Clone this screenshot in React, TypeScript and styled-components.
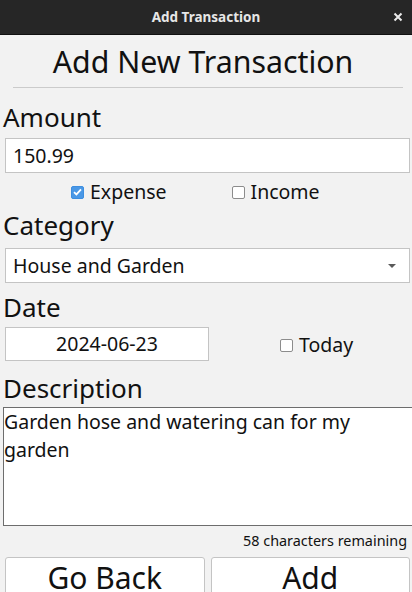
import React from "react";
import styled, { createGlobalStyle } from "styled-components";

const GlobalStyle = createGlobalStyle`
  html, body {
    margin: 0;
    padding: 0;
    background: #f2f2f2;
  }
  body {
    font-family: "Noto Sans", "DejaVu Sans", sans-serif;
    color: #111;
  }
  * { box-sizing: border-box; }
`;

const Window = styled.div`
  width: 412px;
  height: 592px;
  overflow: hidden;
  display: flex;
  flex-direction: column;
  background: #f2f2f2;
`;

const TitleBar = styled.div`
  position: relative;
  flex: 0 0 35px;
  height: 35px;
  background: #262626;
  border-bottom: 1px solid #111;
  display: flex;
  align-items: center;
  justify-content: center;
`;

const TitleText = styled.span`
  font-weight: 700;
  font-size: 13.5px;
  color: #e6e6e6;
`;

const CloseButton = styled.button`
  position: absolute;
  right: 6px;
  top: 9px;
  width: 16px;
  height: 16px;
  padding: 0;
  border: 0;
  background: transparent;
  display: flex;
  align-items: center;
  justify-content: center;
`;

const Content = styled.div`
  display: flex;
  flex-direction: column;
`;

const Heading = styled.h1`
  margin: 7px 0 0;
  padding-right: 6px;
  font-size: 30.3px;
  line-height: 40px;
  font-weight: 400;
  text-align: center;
`;

const Rule = styled.hr`
  margin: 5px 9px 0 13px;
  border: 0;
  border-top: 1px solid #cbcbcb;
  height: 0;
`;

const Label = styled.div<{ $top: number }>`
  margin: ${(p) => p.$top}px 0 0 3px;
  font-size: 26px;
  line-height: 32px;
`;

const Field = styled.div<{ $top: number; $width?: string; $center?: boolean }>`
  margin: ${(p) => p.$top}px 2px 0 5px;
  width: ${(p) => p.$width ?? "auto"};
  height: 35px;
  background: #fff;
  border: 1px solid #c4c4c4;
  font-size: 19.5px;
  line-height: 33px;
  padding: 0 7px;
  text-align: ${(p) => (p.$center ? "center" : "left")};
`;

const Combo = styled(Field)`
  display: flex;
  align-items: center;
  justify-content: space-between;
  padding-right: 13px;
`;

const Arrow = styled.span`
  width: 0;
  height: 0;
  border-left: 4px solid transparent;
  border-right: 4px solid transparent;
  border-top: 4px solid #5a5a5a;
`;

const CheckRow = styled.div`
  margin: 7px 0 0 71px;
  display: flex;
  gap: 65px;
  height: 24px;
`;

const CheckGroup = styled.label`
  display: flex;
  align-items: center;
  gap: 6px;
  font-size: 19.5px;
  line-height: 24px;
`;

const Box = styled.span<{ $checked?: boolean }>`
  width: 13px;
  height: 13px;
  border-radius: 2px;
  border: 1px solid ${(p) => (p.$checked ? "#3d8ee0" : "#8c8c8c")};
  background: ${(p) => (p.$checked ? "#4a98e6" : "#fff")};
  display: flex;
  align-items: center;
  justify-content: center;
  flex: 0 0 13px;
`;

const DateRow = styled.div`
  margin-top: 4px;
  display: flex;
  align-items: center;
`;

const DateField = styled(Field)`
  margin: 0 0 0 5px;
  flex: 0 0 204px;
  width: 204px;
  height: 34px;
  line-height: 32px;
`;

const TodayWrap = styled.div`
  margin-left: 71px;
  padding-top: 2px;
`;

const TextArea = styled.div`
  margin: 3px -4px 0 3px;
  height: 119px;
  background: #fff;
  border: 1px solid #6d6d6d;
  font-size: 19.5px;
  line-height: 28px;
  padding: 0;
`;

const Counter = styled.div`
  margin: 5px 5px 0 0;
  text-align: right;
  font-size: 14.4px;
  line-height: 20px;
`;

const ButtonRow = styled.div`
  margin: 6px 2px 0 5px;
  display: grid;
  grid-template-columns: 1fr 1fr;
  gap: 6px;
`;

const Button = styled.button`
  height: 60px;
  background: #fff;
  border: 1px solid #c4c4c4;
  border-radius: 3px;
  font-family: "Noto Sans", sans-serif;
  font-size: 30px;
  line-height: 40px;
  color: #111;
  padding: 0;
  display: flex;
  align-items: flex-start;
  justify-content: center;
`;

const Check = () => (
  <svg width="9" height="8" viewBox="0 0 9 8">
    <path d="M1 4.2 L3.4 6.4 L8 1.4" fill="none" stroke="#fff" strokeWidth="1.8" />
  </svg>
);

export default function App() {
  return (
    <>
      <GlobalStyle />
      <Window>
        <TitleBar>
          <TitleText>Add Transaction</TitleText>
          <CloseButton aria-label="close">
            <svg width="10" height="10" viewBox="0 0 10 10">
              <path d="M1.5 1.5 L8.5 8.5 M8.5 1.5 L1.5 8.5" stroke="#eaeaea" strokeWidth="2" />
            </svg>
          </CloseButton>
        </TitleBar>
        <Content>
          <Heading>Add New Transaction</Heading>
          <Rule />
          <Label $top={13}>Amount</Label>
          <Field $top={5}>150.99</Field>
          <CheckRow>
            <CheckGroup>
              <Box $checked>
                <Check />
              </Box>
              Expense
            </CheckGroup>
            <CheckGroup>
              <Box />
              Income
            </CheckGroup>
          </CheckRow>
          <Label $top={5}>Category</Label>
          <Combo $top={7}>
            House and Garden
            <Arrow />
          </Combo>
          <Label $top={8}>Date</Label>
          <DateRow>
            <DateField $top={0} $center>
              2024-06-23
            </DateField>
            <TodayWrap>
              <CheckGroup>
                <Box />
                Today
              </CheckGroup>
            </TodayWrap>
          </DateRow>
          <Label $top={11}>Description</Label>
          <TextArea>Garden hose and watering can for my garden</TextArea>
          <Counter>58 characters remaining</Counter>
          <ButtonRow>
            <Button>Go Back</Button>
            <Button>Add</Button>
          </ButtonRow>
        </Content>
      </Window>
    </>
  );
}
